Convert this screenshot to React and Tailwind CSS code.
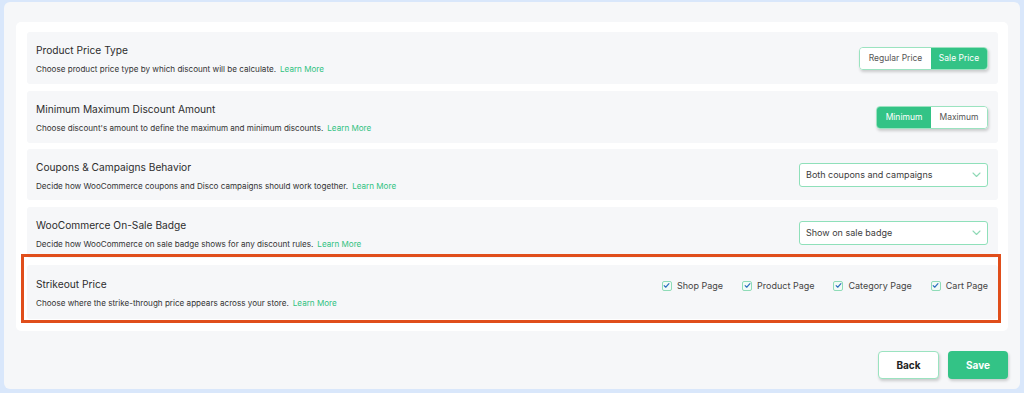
import React, { useState } from 'react';

const rows = [
  {
    title: 'Product Price Type',
    desc: 'Choose product price type by which discount will be calculate.',
    kind: 'toggle',
    options: ['Regular Price', 'Sale Price'],
    widths: ['w-[71px]', 'w-[56px]'],
    active: 1,
    h: 'h-[52px]',
  },
  {
    title: 'Minimum Maximum Discount Amount',
    desc: "Choose discount's amount to define the maximum and minimum discounts.",
    kind: 'toggle',
    options: ['Minimum', 'Maximum'],
    widths: ['w-[54px]', 'w-[56px]'],
    active: 0,
    h: 'h-[52px]',
  },
  {
    title: 'Coupons & Campaigns Behavior',
    desc: 'Decide how WooCommerce coupons and Disco campaigns should work together.',
    kind: 'select',
    value: 'Both coupons and campaigns',
    h: 'h-[51px]',
  },
  {
    title: 'WooCommerce On-Sale Badge',
    desc: 'Decide how WooCommerce on sale badge shows for any discount rules.',
    kind: 'select',
    value: 'Show on sale badge',
    h: 'h-[51px]',
  },
];

const pages = ['Shop Page', 'Product Page', 'Category Page', 'Cart Page'];

const Toggle = ({ options, widths, active }) => {
  const [sel, setSel] = useState(active);
  return (
    <div className="flex h-[23px] rounded-[4px] border border-[#9be3c0] overflow-hidden shadow-[1px_2px_3px_rgba(0,0,0,0.18)]">
      {options.map((o, i) => (
        <button
          key={o}
          onClick={() => setSel(i)}
          className={
            sel === i
              ? `${widths[i]} text-[8.5px] bg-[#33c386] text-white`
              : `${widths[i]} text-[8.5px] bg-white text-[#555]`
          }
        >
          {o}
        </button>
      ))}
    </div>
  );
};

const Select = ({ value }) => (
  <div className="flex items-center justify-between w-[189px] h-[24px] px-[6px] rounded-[3px] border border-[#8fe0ba] bg-white">
    <span className="text-[9px] text-[#3c3c3c]">{value}</span>
    <svg width="9" height="6" viewBox="0 0 9 6" fill="none">
      <path d="M1 1l3.5 3.5L8 1" stroke="#8fd9b6" strokeWidth="1.1" strokeLinecap="round" strokeLinejoin="round" />
    </svg>
  </div>
);

const Row = ({ title, desc, h, children }) => (
  <div className={`flex items-center justify-between ${h} pl-[9px] pr-[10px] bg-[#f6f7f9] rounded-[3px]`}>
    <div className="flex flex-col gap-[7px] pt-[2px]">
      <div className="text-[10.2px] leading-[13px] text-[#2d2d2d]">{title}</div>
      <div className="text-[8.1px] leading-[10px] text-[#333]">
        {desc}
        <span className="ml-[4px] text-[#30c281]">Learn More</span>
      </div>
    </div>
    {children}
  </div>
);

const App = () => {
  const [checked, setChecked] = useState(pages.map(() => true));

  return (
    <div className="w-[1024px] h-[393px] bg-[#d9e7fb] pl-[4px] pr-[4px] pt-[2px] pb-[4px] font-['Inter','Liberation_Sans',sans-serif]">
      <div className="h-full bg-[#f6f7f9] rounded-[6px] px-[12px] pt-[20px] flex flex-col">
        <div className="bg-white rounded-[5px] pl-[11px] pr-[10px] pt-[10px] pb-[12px] flex flex-col">
          <div className="flex flex-col">
            {rows.map((r, i) => (
              <div key={r.title} className={i === 0 ? '' : i === 2 ? 'mt-[6px]' : 'mt-[7px]'}>
                <Row title={r.title} desc={r.desc} h={r.h}>
                  {r.kind === 'toggle' ? (
                    <Toggle options={r.options} widths={r.widths} active={r.active} />
                  ) : (
                    <Select value={r.value} />
                  )}
                </Row>
              </div>
            ))}

            {/* highlighted row */}
            <div className="relative mt-[7px]">
              <Row
                title="Strikeout Price"
                desc="Choose where the strike-through price appears across your store."
                h="h-[54px]"
              >
                <div className="flex items-center gap-[19px] -mt-[13px]">
                  {pages.map((p, i) => (
                    <label key={p} className="flex items-center gap-[5px] cursor-pointer">
                      <span
                        onClick={() => setChecked(checked.map((c, j) => (j === i ? !c : c)))}
                        className="w-[10px] h-[10px] rounded-[2px] border border-[#8fdcb8] bg-[#f1fbf6] flex items-center justify-center"
                      >
                        {checked[i] && (
                          <svg width="7" height="7" viewBox="0 0 8 8" fill="none">
                            <path d="M1.3 4.2l1.8 1.8L6.8 1.8" stroke="#2f6fbf" strokeWidth="1.3" strokeLinecap="round" strokeLinejoin="round" />
                          </svg>
                        )}
                      </span>
                      <span className="text-[9px] text-[#444]">{p}</span>
                    </label>
                  ))}
                </div>
              </Row>
              <div className="absolute -top-[11px] -left-[6px] -right-[3px] -bottom-[4px] border-[3px] border-[#e04e1b] pointer-events-none" />
            </div>
          </div>
        </div>

        <div className="flex justify-end gap-[9px] mt-[20px]">
          <button className="w-[61px] h-[28px] rounded-[4px] bg-white border border-[#9be3c0] text-[10px] font-bold text-[#222] shadow-[1px_2px_3px_rgba(0,0,0,0.18)]">
            Back
          </button>
          <button className="w-[60px] h-[28px] rounded-[4px] bg-[#33c386] text-[10px] font-bold text-white shadow-[1px_2px_3px_rgba(0,0,0,0.18)]">
            Save
          </button>
        </div>
      </div>
    </div>
  );
};

export default App;
